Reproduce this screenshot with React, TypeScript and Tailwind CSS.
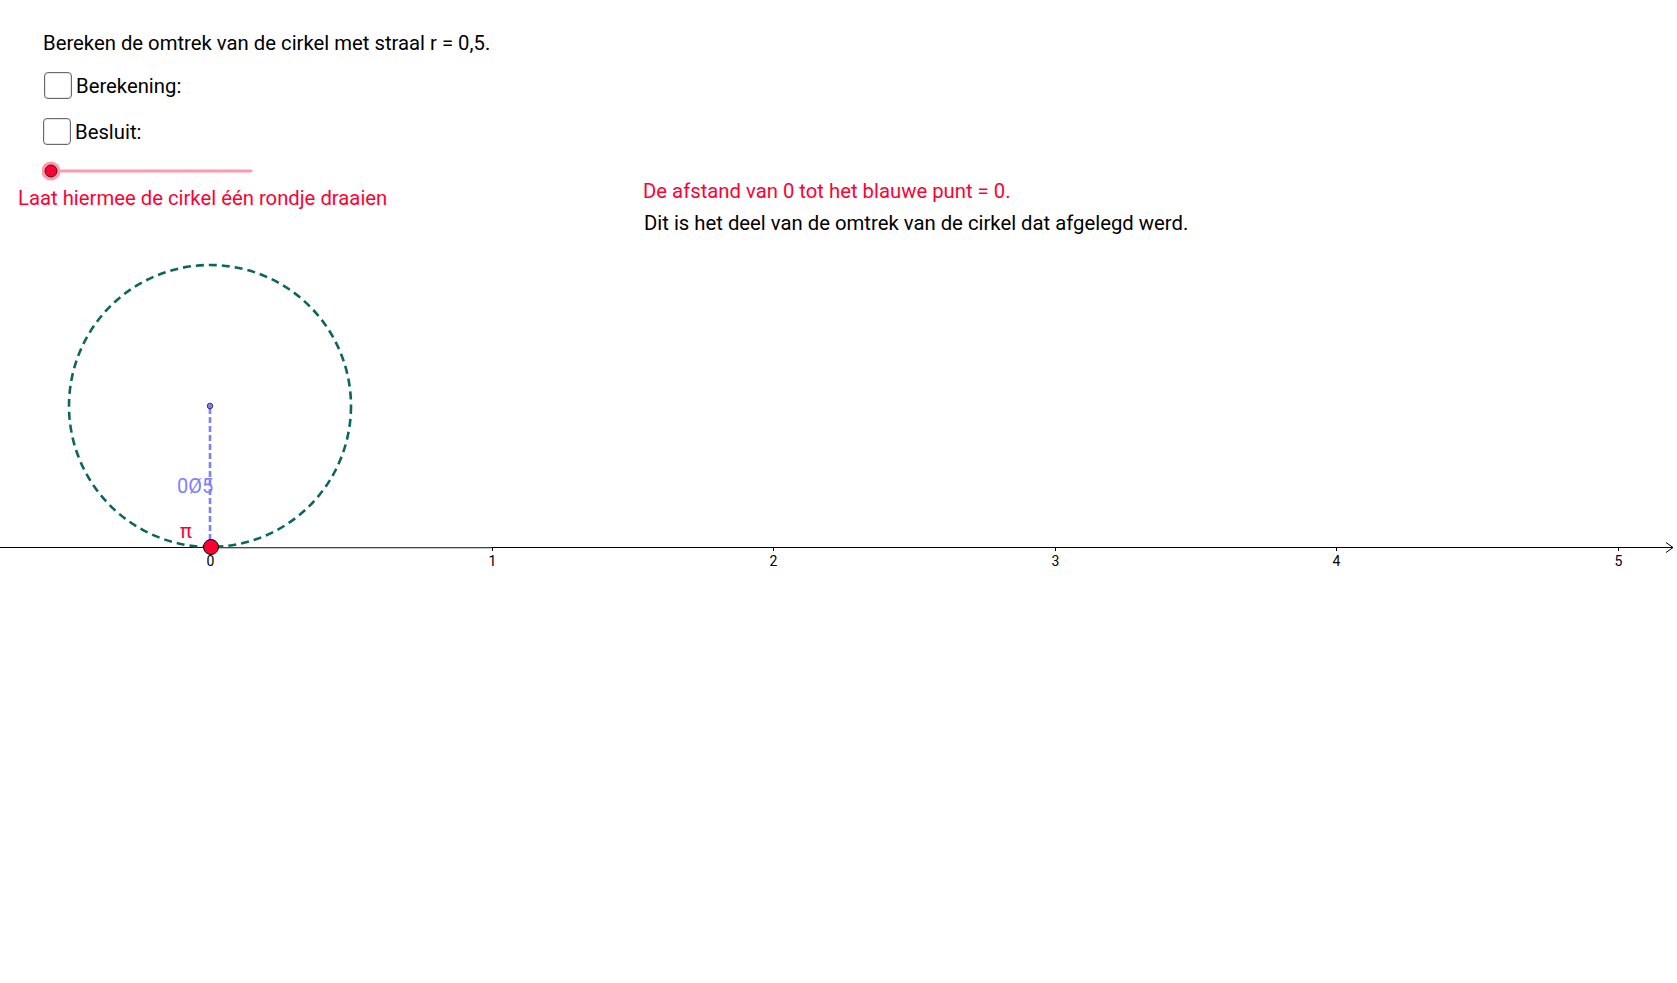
import React from 'react';

const UNIT = 281.6;
const ORIGIN_X = 210;
const AXIS_Y = 547;
const ticks = [0, 1, 2, 3, 4, 5];

function Checkbox({ label }: { label: string }) {
  return (
    <div className="flex items-center gap-[4px]">
      <div className="w-[28px] h-[27px] rounded-[4px] border border-[#6b6b6b] bg-white shadow-[inset_0_0_0_1px_#e5e5e5]" />
      <span className="text-[20.3px] leading-[24px] pt-[1px] text-black">{label}</span>
    </div>
  );
}

function Slider() {
  return (
    <svg width="220" height="20" className="block">
      <line x1="9" y1="10" x2="209" y2="10" stroke="#ff9aab" strokeWidth="3" strokeLinecap="round" />
      <circle cx="9" cy="10" r="9.5" fill="#ff9aab" />
      <circle cx="9" cy="10" r="6" fill="#ff0033" stroke="#3a1a20" strokeWidth="1" />
    </svg>
  );
}

function Graphics() {
  return (
    <svg width="1677" height="983" className="absolute inset-0 block" style={{ fontFamily: 'Roboto, "Liberation Sans", sans-serif' }}>
      {/* x axis */}
      <line x1="0" y1={AXIS_Y + 0.5} x2="1673" y2={AXIS_Y + 0.5} stroke="#000" strokeWidth="1" />
      <line x1={ORIGIN_X} y1={AXIS_Y + 1} x2={ORIGIN_X + UNIT} y2={AXIS_Y + 1} stroke="#8c8c8c" strokeWidth="1.2" />
      <polyline points="1666,542.5 1673,547.5 1666,552.5" fill="none" stroke="#000" strokeWidth="1" />
      {ticks.map((t) => {
        const x = Math.round(ORIGIN_X + t * UNIT) + 0.5;
        return (
          <g key={t}>
            <line x1={x} y1={AXIS_Y} x2={x} y2={AXIS_Y + 4} stroke="#000" strokeWidth="1" />
            <text x={x} y={566} fontSize="14" textAnchor="middle" fill="#000">
              {t}
            </text>
          </g>
        );
      })}

      {/* rolling circle */}
      <circle cx={ORIGIN_X} cy={406} r={141} fill="none" stroke="#0b6660" strokeWidth="2.6" strokeDasharray="8 5" />
      <line x1={ORIGIN_X} y1={408} x2={ORIGIN_X} y2={AXIS_Y} stroke="#7f7fff" strokeWidth="2.6" strokeDasharray="6 3" />
      <circle cx={ORIGIN_X} cy={406} r="2.8" fill="#8080ff" stroke="#333" strokeWidth="0.9" />
      <text x="177" y="493" fontSize="20" fill="#8080ff">
        0Ø5
      </text>
      <text x="180" y="538" fontSize="20" fill="#ff0033">
        π
      </text>
      <circle cx={ORIGIN_X + 1} cy={AXIS_Y} r="7.5" fill="#ff0033" stroke="#000" strokeWidth="1" />
    </svg>
  );
}

export default function App() {
  return (
    <div
      className="relative w-[1677px] h-[983px] overflow-hidden bg-white text-black"
      style={{ fontFamily: 'Roboto, "Liberation Sans", sans-serif' }}
    >
      <Graphics />

      <div className="relative flex items-start">
        {/* left column: task + controls */}
        <div className="w-[643px] shrink-0 pl-[18px] pt-[31px] flex flex-col">
          <p className="ml-[25px] text-[20.3px] leading-[24px]">Bereken de omtrek van de cirkel met straal r = 0,5.</p>
          <div className="ml-[26px] mt-[17px]">
            <Checkbox label="Berekening:" />
          </div>
          <div className="ml-[25px] mt-[19px]">
            <Checkbox label="Besluit:" />
          </div>
          <div className="ml-[24px] mt-[16px]">
            <Slider />
          </div>
          <p className="mt-[5px] text-[20.3px] leading-[24px] text-[#ff0033]">Laat hiermee de cirkel één rondje draaien</p>
        </div>

        {/* right column: result */}
        <div className="pt-[179px] flex flex-col">
          <p className="text-[20.3px] leading-[24px] text-[#ff0033]">De afstand van 0 tot het blauwe punt = 0.</p>
          <p className="ml-[1px] mt-[8px] text-[20.3px] leading-[24px]">Dit is het deel van de omtrek van de cirkel dat afgelegd werd.</p>
        </div>
      </div>
    </div>
  );
}
